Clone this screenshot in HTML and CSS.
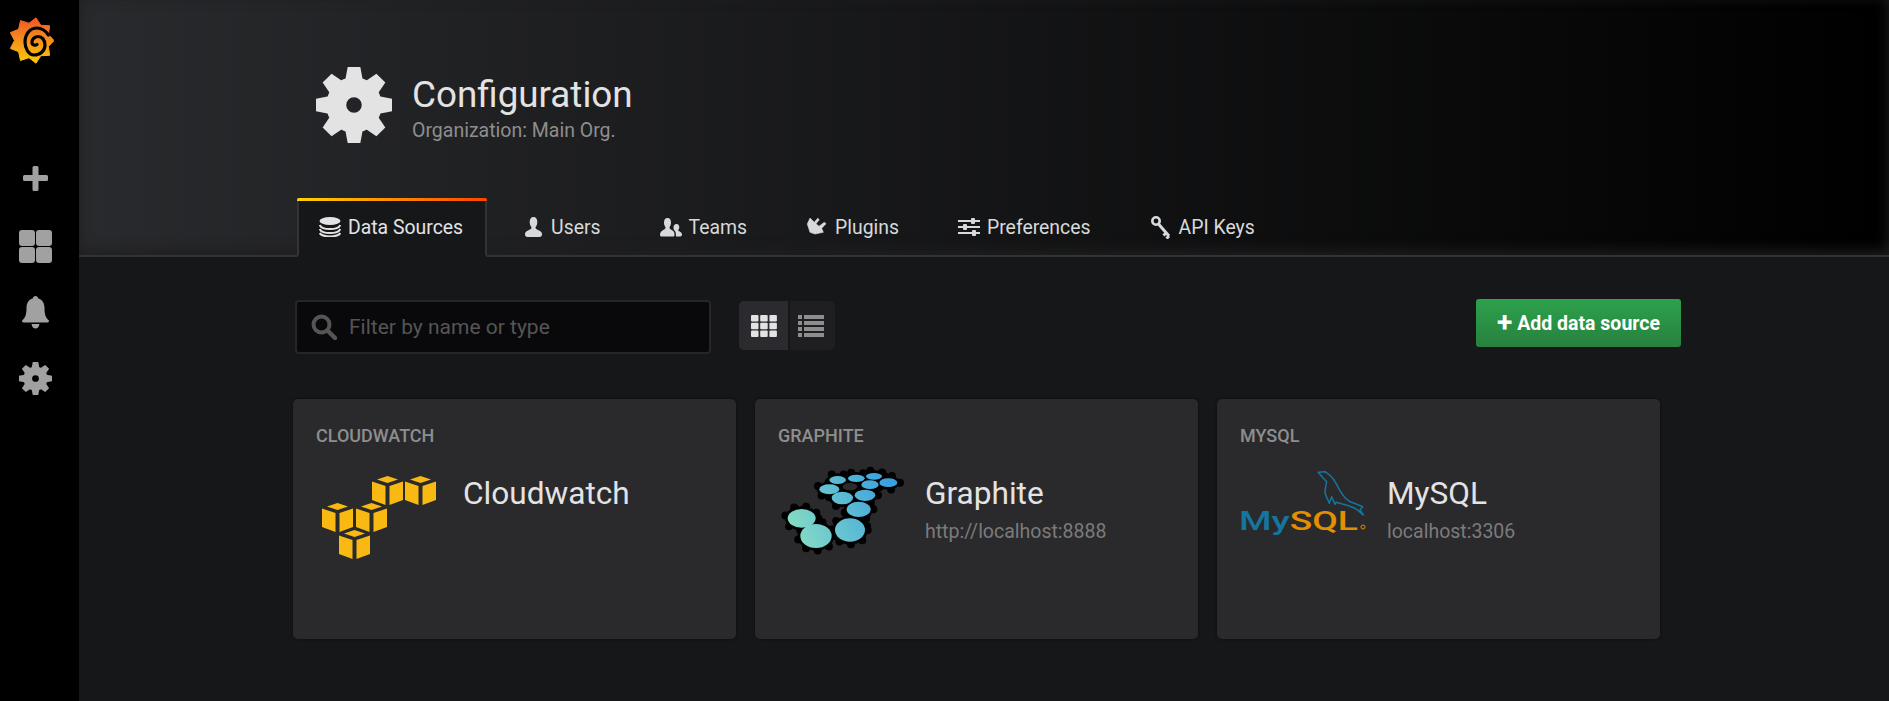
FILE: index.html
```html
<!DOCTYPE html>
<html lang="en">
<head>
    <meta charset="UTF-8">
    <meta name="viewport" content="width=device-width, initial-scale=1.0">
    <title>Configuration</title>
    <link rel="stylesheet" href="styles.css">
</head>
<body>
    <svg class="defs" width="0" height="0">
        <defs>
            <g id="gear-shape">
                <path id="tooth" d="M-5.5 -16 L-4 -24 L4 -24 L5.5 -16 Z"/>
                <use href="#tooth" transform="rotate(45)"/>
                <use href="#tooth" transform="rotate(90)"/>
                <use href="#tooth" transform="rotate(135)"/>
                <use href="#tooth" transform="rotate(180)"/>
                <use href="#tooth" transform="rotate(225)"/>
                <use href="#tooth" transform="rotate(270)"/>
                <use href="#tooth" transform="rotate(315)"/>
                <circle r="11.2" fill="none" stroke="currentColor" stroke-width="12.6"/>
            </g>
            <g id="cube">
                <path d="M15.5 0 L26 3.5 L15.5 7 L5 3.5 Z"/>
                <path d="M0 5.5 L13.5 10 L13.5 29 L0 24 Z"/>
                <path d="M17.5 10 L31 5.5 L31 24 L17.5 29 Z"/>
            </g>
            <linearGradient id="flame" x1="0" y1="0" x2="0" y2="1">
                <stop offset="0" stop-color="#f0562a"/>
                <stop offset="1" stop-color="#fbca0a"/>
            </linearGradient>
            <linearGradient id="cells" gradientUnits="userSpaceOnUse" x1="120" y1="240" x2="440" y2="90">
                <stop offset="0" stop-color="#86dcc4"/>
                <stop offset="1" stop-color="#359ce2"/>
            </linearGradient>
        </defs>
    </svg>

    <div class="app">
        <nav class="sidemenu">
            <svg class="logo" viewBox="0 0 44 48" width="44" height="48">
                <path d="M26 1.8 L30.8 9.3 L39.6 9.7 L38.4 18.5 L44 24.5 L38.4 30.5 L39.6 39.3 L30.8 39.7 L26 47.2 L19 41.7 L10.5 44.4 L8.6 35.7 L0.4 32.4 L4.5 24.5 L0.4 16.6 L8.6 13.3 L10.5 4.6 L19 7.3 Z" fill="url(#flame)" stroke="url(#flame)" stroke-linejoin="round"/>
                <path d="M38.5 19 C35 14 31 12 27 12 C20 12 15 18 15 26 C15 33 19 39 24 39 C30 39 35 35 35 29 C35 24 32 20.5 28 20.5 C24 20.5 21.5 24 22 27 C22.5 29 25 30 27 28.5" fill="none" stroke="#000" stroke-width="3.2" stroke-linecap="round"/>
            </svg>
            <svg class="side-icon" viewBox="0 0 25 25" width="25" height="25">
                <path d="M9.5 1.5 a1.5 1.5 0 0 1 1.5 -1.5 h3 a1.5 1.5 0 0 1 1.5 1.5 V9 H23.5 a1.5 1.5 0 0 1 1.5 1.5 v3 a1.5 1.5 0 0 1 -1.5 1.5 H15.5 v8.5 a1.5 1.5 0 0 1 -1.5 1.5 h-3 a1.5 1.5 0 0 1 -1.5 -1.5 V15 H1.5 A1.5 1.5 0 0 1 0 13.5 v-3 A1.5 1.5 0 0 1 1.5 9 H9.5 Z" fill="#a1a1a1"/>
            </svg>
            <svg class="side-icon" viewBox="0 0 33 33" width="33" height="33">
                <g fill="#a1a1a1">
                    <rect width="16" height="16" rx="3"/>
                    <rect x="17" width="16" height="16" rx="3"/>
                    <rect y="17" width="16" height="16" rx="3"/>
                    <rect x="17" y="17" width="16" height="16" rx="3"/>
                </g>
            </svg>
            <svg class="side-icon" viewBox="0 0 27 33" width="27" height="33">
                <path d="M13.5 0 C15 0 16 1 16.3 2.4 C20.5 3.6 22.5 7 22.5 12 C22.5 19 24 22 26.5 24 C27.3 24.8 27 26.5 25.5 26.5 H1.5 C0 26.5 -0.3 24.8 0.5 24 C3 22 4.5 19 4.5 12 C4.5 7 6.5 3.6 10.7 2.4 C11 1 12 0 13.5 0 Z M9.5 28 H17.5 C17 31 15.5 32.5 13.5 32.5 C11.5 32.5 10 31 9.5 28 Z" fill="#a1a1a1"/>
            </svg>
            <svg class="side-icon" viewBox="-24 -24 48 48" width="33" height="33" color="#a1a1a1" fill="#a1a1a1">
                <use href="#gear-shape"/>
            </svg>
        </nav>

        <div class="main">
            <header class="page-header">
                <div class="header-info">
                    <svg class="header-gear" viewBox="-24 -24 48 48" width="76" height="76" color="#e3e3e3" fill="#e3e3e3">
                        <use href="#gear-shape"/>
                    </svg>
                    <div class="header-text">
                        <h1 class="header-title">Configuration</h1>
                        <div class="header-sub">Organization: Main Org.</div>
                    </div>
                </div>
                <ul class="tabs">
                    <li class="tab active">
                        <svg class="tab-icon" viewBox="0 0 22 20" width="22" height="20">
                            <ellipse cx="11" cy="4" rx="10.5" ry="4" fill="#e3e3e3"/>
                            <path d="M0.8 8 C2 11 7 12 11 12 C15 12 20 11 21.2 8 M0.8 12 C2 15 7 16 11 16 C15 16 20 15 21.2 12 M0.8 16 C2 18.5 7 19.4 11 19.4 C15 19.4 20 18.5 21.2 16" fill="none" stroke="#e3e3e3" stroke-width="2"/>
                        </svg>
                        Data Sources
                    </li>
                    <li class="tab tab-users">
                        <svg class="tab-icon" viewBox="0 0 20 20" width="20" height="20">
                            <path d="M8.5 0 C11 0 12.3 2 12.3 5 C12.3 7.5 11.5 9 10.5 10.2 C10.5 12 12 12.6 14 13.4 C16 14.2 17 15 17 17.5 C17 19 16 20 14.5 20 H2.5 C1 20 0 19 0 17.5 C0 15 1 14.2 3 13.4 C5 12.6 6.5 12 6.5 10.2 C5.5 9 4.7 7.5 4.7 5 C4.7 2 6 0 8.5 0 Z" fill="#d8d9da"/>
                        </svg>
                        Users
                    </li>
                    <li class="tab">
                        <svg class="tab-icon" viewBox="0 0 22 20" width="22" height="20">
                            <path d="M7.5 1 C10 1 11 3 11 5.5 C11 7.5 10.3 9 9.5 10.2 C9.5 12 11 12.6 12.5 13.4 C14 14.2 14.5 15.5 14.5 18 C14.5 19 14 19.5 13 19.5 H2 C1 19.5 0 19 0 18 C0 15.5 1 14.2 2.5 13.4 C4 12.6 5.5 12 5.5 10.2 C4.7 9 4 7.5 4 5.5 C4 3 5 1 7.5 1 Z M16.5 7 C18.5 7 19.3 8.5 19.3 10 C19.3 11.5 18.8 12.4 18.2 13.2 C18.2 14.3 22 14.5 22 17.5 C22 18.8 21.3 19.5 20.3 19.5 H16 C16.2 16.5 15.3 13.6 13.8 12.8 C13.6 12 13.5 11 13.5 10 C13.5 8.5 14.5 7 16.5 7 Z" fill="#d8d9da"/>
                        </svg>
                        Teams
                    </li>
                    <li class="tab tab-plugins">
                        <svg class="tab-icon" viewBox="0 0 21 20" width="21" height="20">
                            <path d="M3 1 L7.3 5.3 L10.7 1.3 L12.3 2.7 L9 6.7 L12 9.3 L17.3 5.3 L19 6.7 L14.7 11.3 L16.3 15.3 L8 17 L3 15.3 L0.3 7 Z" fill="#d8d9da" stroke="#d8d9da" stroke-width="0.6" stroke-linejoin="round"/>
                        </svg>
                        Plugins
                    </li>
                    <li class="tab">
                        <svg class="tab-icon" viewBox="0 0 22 18" width="22" height="18">
                            <g fill="#d8d9da">
                                <rect y="2" width="22" height="2"/>
                                <rect y="8" width="22" height="2"/>
                                <rect y="14" width="22" height="2"/>
                                <rect x="13" y="0" width="4" height="6" rx="1"/>
                                <rect x="5" y="6" width="4" height="6" rx="1"/>
                                <rect x="14" y="12" width="4" height="6" rx="1"/>
                            </g>
                        </svg>
                        Preferences
                    </li>
                    <li class="tab">
                        <svg class="tab-icon" viewBox="0 0 21 23" width="21" height="23">
                            <circle cx="5" cy="5" r="3.7" fill="none" stroke="#d8d9da" stroke-width="2.6"/>
                            <path d="M7.5 8 L18 20 M15 17 L12.5 19.5 M18 20 L15.5 22.5" fill="none" stroke="#d8d9da" stroke-width="3"/>
                        </svg>
                        API Keys
                    </li>
                </ul>
            </header>

            <div class="page-body">
                <div class="toolbar">
                    <label class="search">
                        <svg viewBox="0 0 26 26" width="26" height="26">
                            <circle cx="10.5" cy="10.5" r="8" fill="none" stroke="#555" stroke-width="4"/>
                            <path d="M16.5 16.5 L24 24" stroke="#555" stroke-width="4.4" stroke-linecap="round"/>
                        </svg>
                        <input type="text" placeholder="Filter by name or type">
                    </label>
                    <div class="layout-switch">
                        <div class="layout-btn current">
                            <svg viewBox="0 0 26 22" width="26" height="22">
                                <g fill="#e3e3e3">
                                    <rect width="7.5" height="6.5" rx="1"/><rect x="9.2" width="7.5" height="6.5" rx="1"/><rect x="18.4" width="7.5" height="6.5" rx="1"/>
                                    <rect y="7.8" width="7.5" height="6.5" rx="1"/><rect x="9.2" y="7.8" width="7.5" height="6.5" rx="1"/><rect x="18.4" y="7.8" width="7.5" height="6.5" rx="1"/>
                                    <rect y="15.5" width="7.5" height="6.5" rx="1"/><rect x="9.2" y="15.5" width="7.5" height="6.5" rx="1"/><rect x="18.4" y="15.5" width="7.5" height="6.5" rx="1"/>
                                </g>
                            </svg>
                        </div>
                        <div class="layout-btn">
                            <svg viewBox="0 0 26 22" width="26" height="22">
                                <g fill="#8e8e8e">
                                    <rect width="4" height="4"/><rect x="6" width="20" height="4"/>
                                    <rect y="6" width="4" height="4"/><rect x="6" y="6" width="20" height="4"/>
                                    <rect y="12" width="4" height="4"/><rect x="6" y="12" width="20" height="4"/>
                                    <rect y="18" width="4" height="4"/><rect x="6" y="18" width="20" height="4"/>
                                </g>
                            </svg>
                        </div>
                    </div>
                    <button class="add-button"><span class="add-plus">+</span> Add data source</button>
                </div>

                <div class="cards">
                    <div class="card">
                        <div class="card-type">Cloudwatch</div>
                        <div class="card-row">
                            <svg class="card-logo" viewBox="0 0 125 90" width="125" height="90">
                                <g fill="#f8b912">
                                    <use href="#cube" x="56" y="4"/>
                                    <use href="#cube" x="89" y="4"/>
                                    <use href="#cube" x="6" y="31"/>
                                    <use href="#cube" x="40" y="31"/>
                                    <use href="#cube" x="23" y="58"/>
                                </g>
                            </svg>
                            <div>
                                <div class="card-name">Cloudwatch</div>
                            </div>
                        </div>
                    </div>
                    <div class="card">
                        <div class="card-type">Graphite</div>
                        <div class="card-row">
                            <svg class="card-logo" viewBox="84 66 375 270" width="125" height="90">
                                <g fill="#000" stroke="#000" stroke-width="24" stroke-linecap="round" stroke-dasharray="0 36">
                                    <ellipse cx="155" cy="205" rx="50" ry="36"/>
                                    <ellipse cx="198" cy="258" rx="55" ry="44"/>
                                    <ellipse cx="300" cy="240" rx="53" ry="43"/>
                                    <ellipse cx="326" cy="178" rx="44" ry="31"/>
                                    <ellipse cx="277" cy="144" rx="40" ry="27"/>
                                    <ellipse cx="345" cy="136" rx="39" ry="25"/>
                                    <ellipse cx="238" cy="118" rx="38" ry="23"/>
                                    <ellipse cx="300" cy="110" rx="32" ry="20"/>
                                    <ellipse cx="360" cy="104" rx="34" ry="21"/>
                                    <ellipse cx="263" cy="90" rx="33" ry="20"/>
                                    <ellipse cx="319" cy="85" rx="33" ry="19"/>
                                    <ellipse cx="372" cy="79" rx="32" ry="18"/>
                                    <ellipse cx="415" cy="98" rx="35" ry="21"/>
                                </g>
                                <ellipse cx="300" cy="110" rx="22" ry="11" fill="#2b2b2e"/>
                                <g fill="url(#cells)">
                                    <ellipse cx="155" cy="205" rx="42" ry="28"/>
                                    <ellipse cx="198" cy="258" rx="47" ry="36"/>
                                    <ellipse cx="300" cy="240" rx="45" ry="35"/>
                                    <ellipse cx="326" cy="178" rx="36" ry="23"/>
                                    <ellipse cx="277" cy="144" rx="32" ry="19"/>
                                    <ellipse cx="345" cy="136" rx="31" ry="17"/>
                                    <ellipse cx="238" cy="118" rx="30" ry="15"/>
                                    <ellipse cx="360" cy="104" rx="26" ry="13"/>
                                    <ellipse cx="263" cy="90" rx="25" ry="12"/>
                                    <ellipse cx="319" cy="85" rx="25" ry="11"/>
                                    <ellipse cx="372" cy="79" rx="24" ry="10"/>
                                    <ellipse cx="415" cy="98" rx="27" ry="13"/>
                                </g>
                            </svg>
                            <div>
                                <div class="card-name">Graphite</div>
                                <div class="card-url">http://localhost:8888</div>
                            </div>
                        </div>
                    </div>
                    <div class="card">
                        <div class="card-type">MySQL</div>
                        <div class="card-row">
                            <svg class="card-logo" viewBox="0 0 125 90" width="125" height="90">
                                <path d="M78.3 0.3 L85 -0.3 C90 3 93 6 95 9.7 C98 14 99 18 101.7 21.3 C104 25 107 28 110 29.7 C114 31 119 33 122.7 34.7 L120 38 L123.3 43 C120 40 118 38 115 36.3 C111 34.5 107 33 103.3 32.3 L96 30.3 L95 32.3 L91.7 24.7 L89.3 31.3 L85 21.3 C85 16 86 13 86.7 9.7 L83.3 6.3 Z" fill="none" stroke="#14769e" stroke-width="1.5" stroke-linejoin="round"/>
                                <text class="mysql-word" x="-1" y="58" textLength="119" lengthAdjust="spacingAndGlyphs"><tspan fill="#14769e">My</tspan><tspan fill="#e48e00">SQL</tspan></text>
                                <circle cx="123" cy="55" r="2" fill="none" stroke="#e48e00" stroke-width="1"/>
                            </svg>
                            <div>
                                <div class="card-name">MySQL</div>
                                <div class="card-url">localhost:3306</div>
                            </div>
                        </div>
                    </div>
                </div>
            </div>
        </div>
    </div>
</body>
</html>
```

FILE: styles.css
```css
* {
    box-sizing: border-box;
}
html, body {
    margin: 0;
    height: 100%;
    overflow: hidden;
}
body {
    background: #161719;
    color: #d8d9da;
    font-family: Roboto, "Liberation Sans", sans-serif;
}
.defs {
    position: absolute;
}
.app {
    display: flex;
    height: 100%;
}
.sidemenu {
    width: 79px;
    flex-shrink: 0;
    background: #000;
    display: flex;
    flex-direction: column;
    align-items: center;
    padding: 16px 8px 0 0;
}
.logo {
    margin-right: 7px;
}
.side-icon {
    margin-top: 33px;
}
.side-icon:nth-child(2) {
    margin-top: 102px;
}
.side-icon:nth-child(3) {
    margin-top: 39px;
}
.main {
    flex: 1;
    min-width: 0;
}
.page-header {
    height: 257px;
    padding: 67px 0 0 218px;
    background: linear-gradient(90deg, #292a2d, #000);
    box-shadow: inset 0 -4px 14px #1f1f20;
    border-bottom: 2px solid #333;
    display: flex;
    flex-direction: column;
    justify-content: space-between;
}
.header-info {
    display: flex;
    align-items: center;
    gap: 20px;
    padding-left: 19px;
}
.header-text {
    padding-top: 5px;
}
.header-title {
    margin: 0;
    font-size: 36.8px;
    font-weight: 400;
    line-height: 44px;
    color: #e3e3e3;
}
.header-sub {
    margin-top: 2px;
    font-size: 19.5px;
    line-height: 24px;
    color: #8e8e8e;
}
.tabs {
    display: flex;
    list-style: none;
    margin: 0 0 -2px;
    padding: 0;
}
.tab {
    display: flex;
    align-items: center;
    gap: 7px;
    height: 59px;
    padding: 1px 20px 0;
    margin-right: 16px;
    font-size: 19.4px;
    color: #d8d9da;
    border: 2px solid transparent;
    border-top-width: 0;
}
.tab.active {
    position: relative;
    padding-right: 22px;
    color: #e3e3e3;
    background: #161719;
    border-color: #333;
    border-bottom-color: #161719;
}
.tab.active::before {
    content: "";
    position: absolute;
    top: 0;
    left: -2px;
    right: -2px;
    height: 3px;
    border-radius: 2px 2px 0 0;
    background: linear-gradient(90deg, #ffd500, #ff4400);
}
.tab-users {
    gap: 6px;
    margin-right: 15px;
}
.tab-plugins {
    margin-right: 15px;
}
.page-body {
    padding: 42px 0 0 214px;
}
.toolbar {
    display: flex;
    align-items: flex-start;
    width: 1388px;
}
.search {
    display: flex;
    align-items: center;
    gap: 12px;
    width: 416px;
    height: 54px;
    margin: 1px 28px 0 2px;
    padding: 0 14px;
    background: #09090b;
    border: 2px solid #262628;
    border-radius: 4px;
}
.search input {
    flex: 1;
    min-width: 0;
    background: none;
    border: 0;
    outline: 0;
    padding: 0;
    font-family: inherit;
    font-size: 21px;
    color: #d8d9da;
}
.search input::placeholder {
    color: #555;
    opacity: 1;
}
.layout-switch {
    display: flex;
    margin-top: 2px;
    gap: 2px;
}
.layout-btn {
    width: 45px;
    height: 49px;
    padding-right: 4px;
    display: flex;
    align-items: center;
    justify-content: center;
    background: #1f1f21;
    border-radius: 0 5px 5px 0;
}
.layout-btn.current {
    width: 49px;
    padding-right: 0;
    background: #2b2b2f;
    border-radius: 5px 0 0 5px;
}
.add-button {
    margin-left: auto;
    width: 205px;
    height: 48px;
    padding: 0;
    border: 0;
    border-radius: 3px;
    background: linear-gradient(180deg, #2da14c, #27813f);
    color: #fff;
    font-family: inherit;
    font-size: 19.5px;
    font-weight: 700;
}
.add-plus {
    font-size: 28px;
    line-height: 18px;
    vertical-align: -2px;
}
.cards {
    display: grid;
    grid-template-columns: repeat(3, 443px);
    gap: 19px;
    margin-top: 45px;
}
.card {
    height: 240px;
    padding: 27px 23px;
    background: #2a2a2d;
    border-radius: 5px;
    box-shadow: 0 0 3px #0e0e0f;
}
.card-type {
    font-size: 18px;
    font-weight: 500;
    line-height: 20px;
    text-transform: uppercase;
    color: #8e8e8e;
}
.card-row {
    display: flex;
    gap: 22px;
    margin-top: 26px;
}
.card-logo {
    flex-shrink: 0;
    overflow: visible;
}
.card-name {
    font-size: 31.6px;
    line-height: 38px;
    margin-top: 3px;
    color: #e3e3e3;
}
.card-url {
    font-size: 19.5px;
    line-height: 24px;
    margin-top: 7px;
    color: #7b7b7b;
}
.mysql-word {
    font-family: Roboto, sans-serif;
    font-size: 25px;
    font-weight: 500;
}
```
